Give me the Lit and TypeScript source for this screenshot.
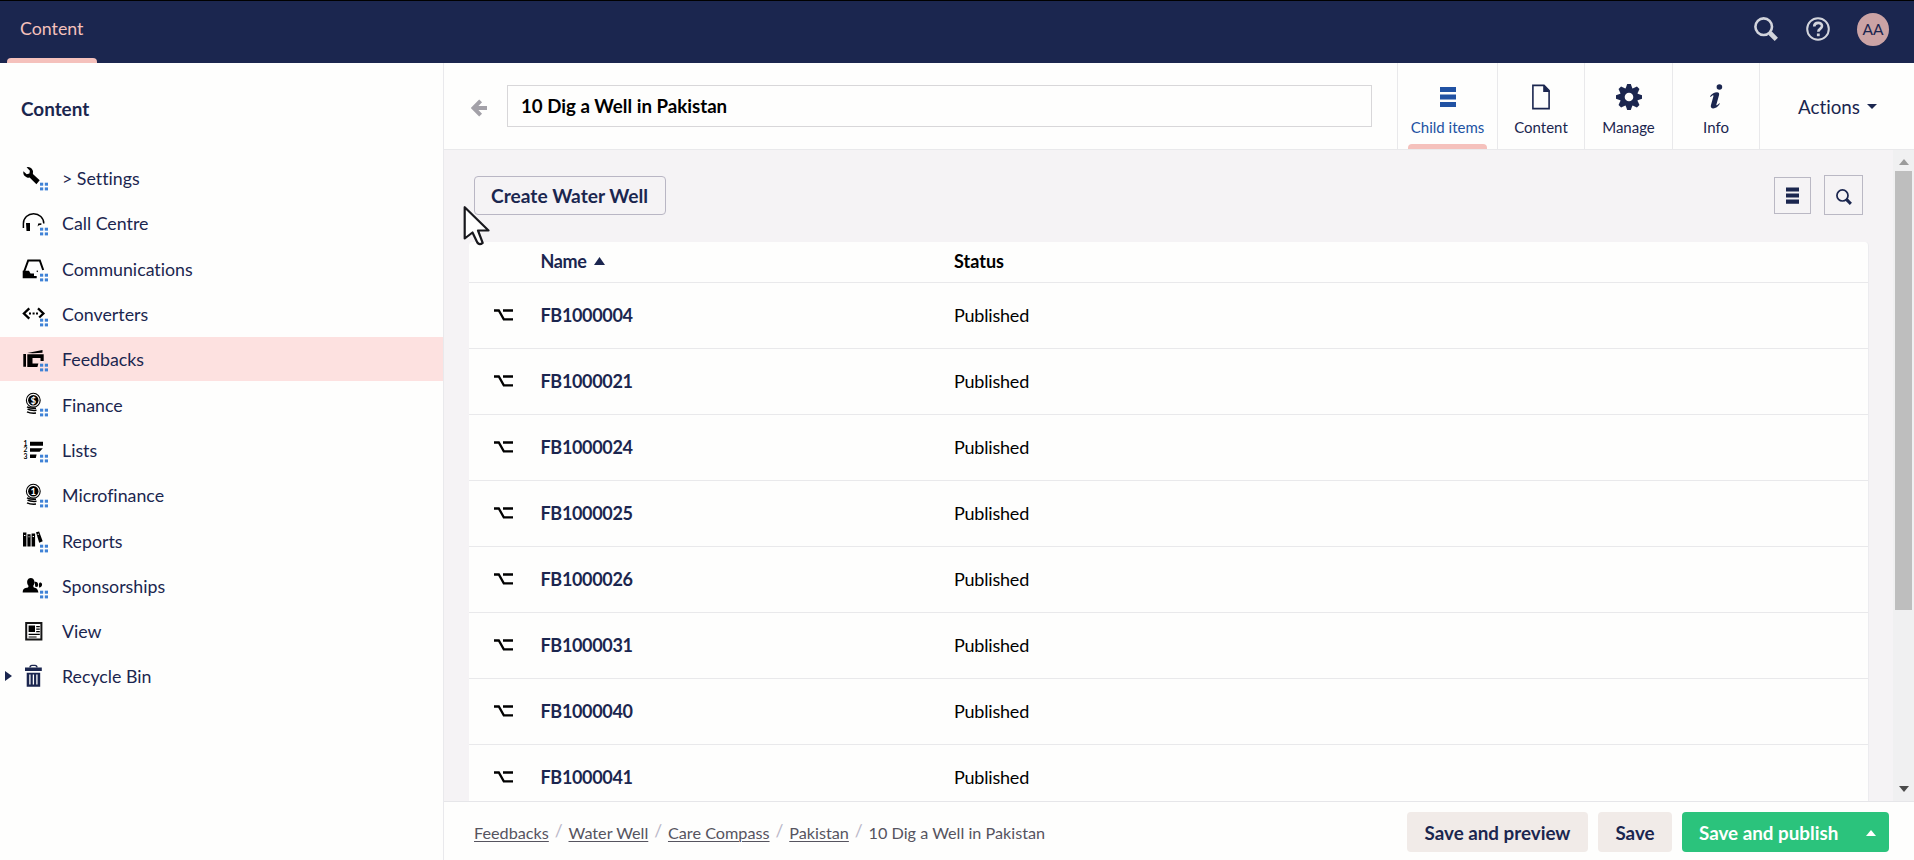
import { LitElement, html, svg, css } from "lit";
import { customElement } from "lit/decorators.js";

const dots = svg`<g fill="#3f82d6"><rect x="19" y="18.7" width="3.2" height="3"/><rect x="23.8" y="18.7" width="3.2" height="3"/><rect x="19" y="23.4" width="3.2" height="3"/><rect x="23.8" y="23.4" width="3.2" height="3"/></g>`;

const coin = (mark: string) => svg`
  <circle cx="12.3" cy="10.2" r="6.9" fill="none" stroke="#000" stroke-width="1.1"/>
  <circle cx="12.3" cy="10.2" r="5.2"/>
  <text x="12.3" y="13.6" text-anchor="middle" font-size="9.5" font-weight="700" fill="#fff">${mark}</text>
  <path d="M6 16.8q3.500 1.900 9 1.400M6.500 19.200q3 1.500 9 1.100M6 21.800q3.500 1.800 9 1.300" fill="none" stroke="#000" stroke-width="1.5"/>`;

const icons: Record<string, unknown> = {
  wrench: svg`<path d="M5.600 3.200a5.300 5.300 0 0 1 6.300 6.900l6.800 6.200-3.300 4-6.800-6.800a5.200 5.200 0 0 1-6.200-6.200l3.300 3 2.700-.7.500-2.800z"/>`,
  headset: svg`<path d="M2.400 19V14.500a10.200 9.800 0 0 1 20.400 0" fill="none" stroke="#000" stroke-width="1.500"/><path d="M5 14h4v8H5.500zM16.600 17.600l.6-3 3.200-.4v1.600l-2.500.500z"/>`,
  tray: svg`<path d="M3 17 7.200 5.400H18.800L22.200 15" fill="none" stroke="#000" stroke-width="2"/><path d="M1.700 15.800H8l1.500 2.700H13v2.500h2.700v2.200H1.700zM15 16l2-.6v1.800z"/>`,
  arrows: svg`<path d="M8.300 8.400 2.900 13.500l5.400 5.200M17 8.400l5.400 5.100-4.200 4" fill="none" stroke="#000" stroke-width="2.300"/><path d="M8 12.600h2v2H8zM11.600 12.600h2v2h-2zM15 12.600h2v2h-2z"/>`,
  cards: svg`<path d="M2.300 9H5v12.700H2.300zM6.300 8 21.500 5v2.700L12 8.200zM6.300 9.200H22.700V16h-3.200v-3h-8v5.600h5.900l-1 3.400H6.300z"/>`,
  dollar: coin("$"),
  list: svg`<path d="M9 5.700h13v4H9zM9 12.300h12.800l-3.200 3.500H9zM9 18.400h6.600L14.800 22H9z"/><g font-size="6.800" font-weight="700"><text x="2.600" y="9.900">1</text><text x="2.600" y="16.400">2</text><text x="2.600" y="22.700">3</text></g>`,
  one: coin("1"),
  books: svg`<path d="M2 6.400h3.400v14.200H2zM6.400 8.200h3.200v12.400H6.400zM10.600 7.400h3.500v13.200h-3.500zM15 6.300l3.100-.8 3.600 9.800-3.500 1.400z"/><path d="M3 9.500h1.400M7.500 10.800h1M11.700 10.500h1.300M16.700 8.500l1.200-.4" stroke="#fff"/>`,
  people: svg`<path d="M1.700 20.500c.2-4 1.800-4.300 5.300-4.900l.6-1.500C5 10.700 6 6 9.800 6s4.700 4.700 2.400 8.100l.6 1.500c2.600.5 4 1.400 4.600 4.900zM13.500 9.800c3.600-.9 4.500 3 2.800 5.200l-2-.2zM19 10.600c2.400 0 2.600 2.700 1.200 4.200l-1.800 1c-.6-1.600-.9-4.800.6-5.200z"/>`,
  article: svg`<path d="M5.200 6.100H20.400V22.600H5.200z" fill="#fff" stroke="#151515" stroke-width="2"/><path d="M7.600 8.500h6.400v6.500H7.600zM15.200 9h3.600v1.200h-3.600zM15.200 11.500h3.600v1.200h-3.600zM15.200 14h3.600v1.200h-3.600zM7.600 16.800h11.200v1.200H7.600zM7.600 19.400h8v1.200h-8z"/>`,
  trash: svg`<g fill="#1b264f"><path d="M9 5.500q0-2.200 2-2.200h3q2 0 2 2.200" fill="none" stroke="#1b264f" stroke-width="1.300"/><path d="M4 5.500h16.800v3.600H4zM5.700 10.700h13.500V24.700H5.700z"/><path d="M8.900 12.500v10M12.400 12.500v10M15.900 12.500v10" stroke="#fff" stroke-width="1.300"/></g>`,
};

const tree = [
  { icon: "wrench", label: "> Settings", app: true },
  { icon: "headset", label: "Call Centre", app: true },
  { icon: "tray", label: "Communications", app: true },
  { icon: "arrows", label: "Converters", app: true },
  { icon: "cards", label: "Feedbacks", app: true, active: true },
  { icon: "dollar", label: "Finance", app: true },
  { icon: "list", label: "Lists", app: true },
  { icon: "one", label: "Microfinance", app: true },
  { icon: "books", label: "Reports", app: true },
  { icon: "people", label: "Sponsorships", app: true },
  { icon: "article", label: "View" },
  { icon: "trash", label: "Recycle Bin", caret: true },
];

const rows = ["FB1000004", "FB1000021", "FB1000024", "FB1000025", "FB1000026", "FB1000031", "FB1000040", "FB1000041"];

const bars = html`<svg width="16" height="20" viewBox="0 0 16 20" fill="currentColor"><path d="M0 0h16v5H0zM0 7.500h16v5H0zM0 15h16v5H0z"/></svg>`;
const page = html`<svg width="18" height="26" viewBox="0 0 18 26"><path d="M.9 1.400H12L17.100 6.500V24.600H.9z" fill="none" stroke="currentColor" stroke-width="1.600"/><path d="M11.200 1v7H18L11.800 1z" fill="currentColor"/></svg>`;
const gear = html`<svg width="26" height="26" viewBox="0 0 26 26"><g fill="currentColor">${[0, 45, 90, 135].map(
  (a) => svg`<path d="M11.200 0h3.600l1.800 5v16l-1.800 5h-3.600l-1.800-5V5z" transform="rotate(${a} 13 13)"/>`
)}<circle cx="13" cy="13" r="9"/></g><circle cx="13" cy="13" r="4.300" fill="#fefefd"/></svg>`;
const info = html`<svg width="14" height="25" viewBox="0 0 14 25" fill="currentColor"><circle cx="10.400" cy="3" r="2.800"/><path d="M1 12.300C3 9.600 5.500 8.300 8 8.300c1.800 0 2.500 1.100 2 2.900L7.400 20.500c-.3 1.200.5 1.300 2.800-1.300l.7.600c-2 3-4.200 4.600-6.600 4.600-2 0-2.900-1.200-2.400-3.200l2.500-9c.3-1.300-.5-1.500-2.700.7z"/></svg>`;
const glass = (size: number) => html`<svg width=${size} height=${size} viewBox="0 0 24 24" fill="none" stroke="currentColor"><circle cx="9.700" cy="9.700" r="8.300" stroke-width="2.600"/><path d="M16 16l6.300 6.300" stroke-width="4.600"/><path d="M15 15l3 3" stroke-width="3"/></svg>`;

@customElement("app-root")
class AppRoot extends LitElement {
  static styles = css`
    :host { display: flex; flex-direction: column; height: 860px; overflow: hidden; background: #fefefd; color: #1b264f; font-family: Lato, sans-serif; font-size: 17.800px; line-height: 24px; position: relative; font-variant-ligatures: none; }
    * { box-sizing: border-box; }
    svg { display: block; flex: none; }
    button { font: inherit; color: inherit; margin: 0; cursor: pointer; font-variant-ligatures: none; }
    .top { height: 63px; flex: none; background: #1b264f; border-top: 1px solid #000; display: flex; justify-content: space-between; }
    .section { margin-left: 7px; width: 90px; padding: 15px 0 0 13px; color: #f5c1bc; display: flex; flex-direction: column; justify-content: space-between; }
    .section::after { content: ""; height: 5px; margin-left: -13px; background: #f5c1bc; border-radius: 4px 4px 0 0; }
    .tools { display: flex; align-items: center; padding: 0 25px 6px 0; color: #d2d4dc; }
    .help { margin: 0 27px 0 28px; }
    .avatar { width: 32px; height: 33px; border-radius: 50%; background: #cba3a5; color: #1b264f; font-size: 15.500px; display: grid; place-items: center; padding-bottom: 1px; }
    .body { flex: 1; display: flex; min-height: 0; }
    .side { width: 444px; flex: none; border-right: 1px solid #e9e9ec; }
    .side h1 { font-size: 18.900px; font-weight: 700; margin: 0; padding: 34px 21px 0; height: 93px; }
    .node { height: 44px; margin-bottom: 1.300px; display: flex; align-items: center; padding-left: 5px; }
    .node.active { background: #fde1e0; }
    .caret { width: 16px; }
    .node .label { margin-left: 13px; padding-top: .4px; }
    .node svg text { font-family: Lato, sans-serif; }
    .main { flex: 1; min-width: 0; display: flex; flex-direction: column; }
    .head { height: 87px; flex: none; display: flex; border-bottom: 1px solid #e9e9eb; }
    .back { margin: 36px 20px 0 27px; color: #a3a1a8; }
    .title { width: 865px; height: 42px; margin-top: 22px; border: 1px solid #d8d7d9; padding: 0 13px; font: 700 18.700px/40px Lato, sans-serif; color: #000; background: #fefefd; }
    .tabs { margin-left: auto; display: flex; }
    .tab { border-left: 1px solid #e9e9eb; display: flex; flex-direction: column; align-items: center; font-size: 15px; position: relative; }
    .tab .pic { height: 52px; padding-top: 15px; display: grid; place-items: center; }
    .tab.on { color: #2152a3; }
    .tab.on::after { content: ""; width: 79px; height: 5px; background: #f5c1bc; border-radius: 4px 4px 0 0; margin-top: auto; }
    .tab:nth-child(1) { width: 100px; } .tab:nth-child(2) { width: 87px; } .tab:nth-child(3) { width: 88px; } .tab:nth-child(4) { width: 87px; }
    .actions { border-left: 1px solid #e9e9eb; width: 155px; padding: 1px 0 0 38px; display: flex; align-items: center; gap: 7px; font-size: 18.800px; }
    .scroll { flex: 1; min-height: 0; display: flex; background: #f5f3f5; }
    .view { flex: 1; overflow: hidden; padding: 25px 24px 0 25px; }
    .bar { height: 67px; display: flex; align-items: flex-start; padding: 0 6px 0 5px; }
    .create { width: 192px; height: 39px; margin-top: 1px; border: 1px solid #b9b6c4; border-radius: 4px; background: none; font-size: 19.150px; font-weight: 700; padding: 0 1px 0 0; }
    .sq { width: 37px; height: 37px; margin-top: 2px; border: 1px solid #bab8c4; display: grid; place-items: center; padding: 0; background: none; }
    .sq.list { margin-left: auto; }
    .sq.list svg { width: 13px; height: 17px; }
    .sq.find { width: 39px; height: 40px; margin: 0 0 0 13px; padding-top: 3px; }
    .table { background: #fefefd; border-radius: 4px 4px 0 0; height: 700px; border-right: 1px solid #ececef; }
    .tr { display: grid; grid-template-columns: 71.500px 413.500px 1fr; align-items: center; height: 66px; padding-bottom: 2px; border-bottom: 1px solid #e9e9eb; color: #000; font-size: 18px; letter-spacing: -.2px; }
    .tr.th { height: 41px; font-weight: 700; }
    .tr svg.opt { margin-left: 25px; }
    .name { color: #1b264f; font-weight: 700; display: flex; align-items: center; gap: 7px; letter-spacing: -.33px; }
    .th .status { letter-spacing: 0; }
    .track { width: 21px; background: #f0f0f1; display: flex; flex-direction: column; align-items: center; padding: 9px 0; }
    .thumb { width: 17px; height: 439px; background: #bebebe; margin: 6px 0 auto; }
    .foot { height: 59px; flex: none; border-top: 1px solid #e6e6e9; display: flex; align-items: center; padding: 2px 25px 0 30px; gap: 10px; }
    .crumbs { flex: 1; display: flex; padding-top: 2px; font-size: 16.230px; color: #56545f; }
    .crumbs a { text-decoration: underline; text-underline-offset: 2px; text-decoration-thickness: 1px; }
    .crumbs i { font-style: normal; color: #bab7c8; width: 19.700px; text-align: center; font-size: 17.500px; position: relative; top: -2px; }
    .btn { height: 40px; border: 0; border-radius: 4px; background: #f1ebe8; font-size: 18.800px; font-weight: 700; padding: 1px 0 0; width: 181px; }
    .btn.save { width: 74px; }
    .btn.pub { width: 207px; background: #2bc37c; color: #fff; display: flex; align-items: center; padding-left: 17px; }
    .btn.pub svg { margin: 0 13px 0 auto; }
    .cursor { position: absolute; left: 462px; top: 205px; }
  `;

  render() {
    return html`
      <header class="top">
        <div class="section">Content</div>
        <div class="tools">
          ${glass(24)}
          <svg class="help" width="24" height="24" viewBox="0 0 24 24"><circle cx="12" cy="12" r="10.800" fill="none" stroke="currentColor" stroke-width="2"/><path d="M8.200 9.500c.1-4.800 7.800-4.800 7.800-.4 0 2.900-3.700 2.700-3.700 5.600" fill="none" stroke="currentColor" stroke-width="2.600"/><path d="M10.900 16.500h2.800v2.700h-2.800z" fill="currentColor"/></svg>
          <div class="avatar">AA</div>
        </div>
      </header>
      <div class="body">
        <nav class="side">
          <h1>Content</h1>
          ${tree.map(
            (n) => html`<div class="node ${n.active ? "active" : ""}">
              <span class="caret">${n.caret ? html`<svg width="7" height="10" viewBox="0 0 7 10"><path d="M0 0l7 5-7 5z" fill="#1b264f"/></svg>` : ""}</span>
              <svg width="28" height="28" viewBox="0 0 28 28">${icons[n.icon]}${n.app ? dots : ""}</svg>
              <span class="label">${n.label}</span>
            </div>`
          )}
        </nav>
        <main class="main">
          <div class="head">
            <svg class="back" width="16" height="18" viewBox="0 0 16 18" fill="none" stroke="currentColor"><path d="M9.600 1.800 2.600 9l7 7.200" stroke-width="4"/><path d="M3 9h13" stroke-width="4"/></svg>
            <input class="title" .value=${"10 Dig a Well in Pakistan"} />
            <div class="tabs">
              <div class="tab on"><span class="pic">${bars}</span>Child items</div>
              <div class="tab"><span class="pic">${page}</span>Content</div>
              <div class="tab"><span class="pic">${gear}</span>Manage</div>
              <div class="tab"><span class="pic">${info}</span>Info</div>
              <div class="actions">Actions <svg width="10" height="5" viewBox="0 0 10 5"><path d="M0 0h10L5 5z" fill="#1b264f"/></svg></div>
            </div>
          </div>
          <div class="scroll">
            <div class="view">
              <div class="bar">
                <button class="create">Create Water Well</button>
                <button class="sq list">${bars}</button>
                <button class="sq find">${glass(16)}</button>
              </div>
              <div class="table">
                <div class="tr th"><span></span><span class="name">Name <svg width="11" height="8" viewBox="0 0 11 8"><path d="M0 8h11L5.500 0z" fill="#1b264f"/></svg></span><span class="status">Status</span></div>
                ${rows.map(
                  (r) => html`<div class="tr"><svg class="opt" width="19" height="12" viewBox="0 0 19 12" fill="none" stroke="#000" stroke-width="2.300"><path d="M0 1.500h4.800l5 8.800H19M9 1.500h10"/></svg><span class="name">${r}</span><span>Published</span></div>`
                )}
              </div>
            </div>
            <div class="track">
              <svg width="10" height="6" viewBox="0 0 10 6"><path d="M0 6h10L5 0z" fill="#9b9b9b"/></svg>
              <div class="thumb"></div>
              <svg width="10" height="6" viewBox="0 0 10 6"><path d="M0 0h10L5 6z" fill="#4b4b4b"/></svg>
            </div>
          </div>
          <footer class="foot">
            <div class="crumbs"><a>Feedbacks</a><i>/</i><a>Water Well</a><i>/</i><a>Care Compass</a><i>/</i><a>Pakistan</a><i>/</i><span>10 Dig a Well in Pakistan</span></div>
            <button class="btn">Save and preview</button>
            <button class="btn save">Save</button>
            <button class="btn pub">Save and publish <svg width="10" height="6" viewBox="0 0 10 6"><path d="M0 6h10L5 0z" fill="#fff"/></svg></button>
          </footer>
        </main>
      </div>
      <svg class="cursor" width="30" height="42" viewBox="0 0 30 42"><path d="M2.700 2.200 2.700 33.500 10.500 27.500 15.300 37.500Q17.500 40.500 20.700 37.800L16 25.500H26.500z" fill="#fefefe" stroke="#18181d" stroke-width="2.200" stroke-linejoin="round"/></svg>
    `;
  }
}
